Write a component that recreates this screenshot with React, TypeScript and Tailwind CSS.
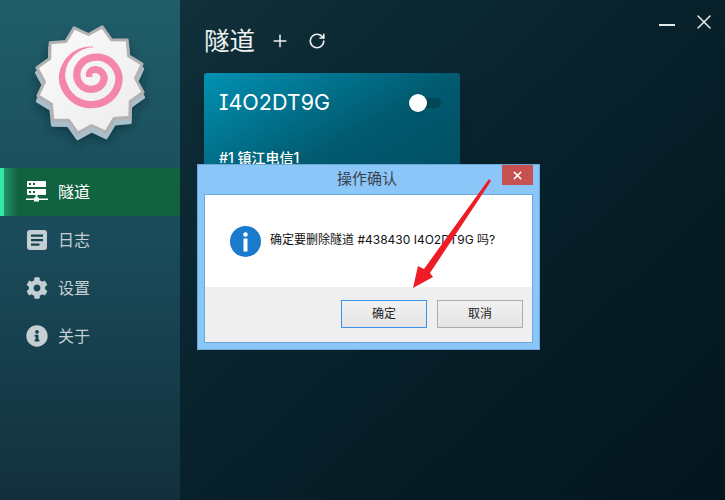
import { Plus, RotateCw, X } from "lucide-react";
import { FaCog, FaInfoCircle } from "react-icons/fa";

const cjk = "font-['Inter','Noto_Sans_CJK_SC',sans-serif]";

// 12 pointed fish cake outline
const starPoints = (cx: number, cy: number, outer: number, inner: number) => {
  const pts: string[] = [];
  for (let i = 0; i < 24; i++) {
    const a = ((i * 15 - 90 - 17) * Math.PI) / 180;
    const r = i % 2 === 0 ? outer : inner;
    pts.push(`${(cx + r * Math.cos(a)).toFixed(1)},${(cy + r * Math.sin(a)).toFixed(1)}`);
  }
  return pts.join(" ");
};

// radius of the swirl per quarter turn, read off the logo, from the outer tip inwards
const swirlRadii = [30, 31, 27.5, 26, 19.5, 16, 12, 11, 7, 3];

const swirlPath = () => {
  const outer: string[] = [];
  const inner: string[] = [];
  const last = swirlRadii.length - 1;
  const steps = 160;
  for (let i = 0; i <= steps; i++) {
    const p = (i / steps) * last;
    const k = Math.min(Math.floor(p), last - 1);
    const f = p - k;
    const r = swirlRadii[k] + (swirlRadii[k + 1] - swirlRadii[k]) * f;
    const a = -Math.PI / 2 - (p * Math.PI) / 2;
    const w = Math.min(3.7, 0.4 + p * 2.8);
    const c = Math.cos(a);
    const s = Math.sin(a);
    outer.push(`${(93 + (r + w) * c).toFixed(1)} ${(77 + (r + w) * s).toFixed(1)}`);
    inner.unshift(`${(93 + (r - w) * c).toFixed(1)} ${(77 + (r - w) * s).toFixed(1)}`);
  }
  return `M${outer.join("L")}L${inner.join("L")}Z`;
};

const Logo = () => (
  <svg width="180" height="168" viewBox="0 0 180 168" className="block">
    <defs>
      <filter id="logoShadow" x="-20%" y="-20%" width="140%" height="140%">
        <feDropShadow dx="0" dy="3" stdDeviation="5" floodColor="#06202a" floodOpacity="0.55" />
      </filter>
      <linearGradient id="logoFace" x1="0" y1="0" x2="1" y2="1">
        <stop offset="0" stopColor="#fbfbfb" />
        <stop offset="1" stopColor="#ececec" />
      </linearGradient>
    </defs>
    <polygon
      points={starPoints(90, 85, 55, 46)}
      fill="#a9bfcc"
      stroke="#a9bfcc"
      strokeWidth="3"
      strokeLinejoin="round"
      filter="url(#logoShadow)"
    />
    <polygon
      points={starPoints(90, 80, 54.5, 45.5)}
      fill="url(#logoFace)"
      stroke="#b2b2b2"
      strokeWidth="3"
      strokeLinejoin="round"
    />
    <path d={swirlPath()} fill="#f486a9" />
  </svg>
);

const ServerIcon = () => (
  <svg width="22" height="22" viewBox="0 0 22 22" fill="currentColor">
    <path fillRule="evenodd" d="M2 0h17a1 1 0 0 1 1 1v5H1V1a1 1 0 0 1 1-1ZM3 2v2h2V2H3Zm4 0v2h2V2H7Z" />
    <path fillRule="evenodd" d="M1 8h19v5a1 1 0 0 1-1 1H2a1 1 0 0 1-1-1V8Zm2 2v2h2v-2H3Zm4 0v2h2v-2H7Z" />
    <path d="M9.500 14h2v2.500h1.500v1H22v1.500H13v1.500H8V19H0v-1.500h8v-1h1.500V14Z" />
  </svg>
);

const LogIcon = () => (
  <svg width="20" height="20" viewBox="0 0 20 20">
    <rect width="20" height="20" rx="3" fill="currentColor" />
    <path d="M4 4.500h12v2.200H4ZM4 9h12v2.200H4ZM4 13.500h8.500v2.200H4Z" fill="#17424f" />
  </svg>
);

const navItems = [
  { label: "隧道", icon: <ServerIcon />, active: true },
  { label: "日志", icon: <LogIcon /> },
  { label: "设置", icon: <FaCog size={22} /> },
  { label: "关于", icon: <FaInfoCircle size={22} /> },
];

const Sidebar = () => (
  <aside className="w-[180px] shrink-0 bg-gradient-to-b from-[#1f5d69] via-[#1a4a5a] to-[#12303b]">
    <Logo />
    <nav>
      {navItems.map((item) => (
        <div
          key={item.label}
          className={
            item.active
              ? "flex h-12 items-center gap-[10px] pl-[26px] bg-[#11633f] text-white"
              : "flex h-12 items-center gap-[10px] pl-[26px] text-[#c5cfd3]"
          }
        >
          {item.active && (
            <span className="absolute left-0 h-12 w-[18px] bg-gradient-to-r from-[#2a9f7e] to-[#11633f]">
              <span className="block h-12 w-1 bg-[#35e6a4]" />
            </span>
          )}
          <span className="relative flex w-[22px] justify-center">{item.icon}</span>
          <span className="relative text-[16px]">{item.label}</span>
        </div>
      ))}
    </nav>
  </aside>
);

const Card = () => (
  <div className="mt-[13px] h-[150px] w-[256px] rounded-[3px] bg-gradient-to-br from-[#0192b3] via-[#015a70] to-[#014a5c] px-[15px] pt-[13px] text-white shadow-lg">
    <div className="flex items-center justify-between pr-[4px]">
      <span className="text-[21.500px] leading-[33px] [font-feature-settings:'cv08']">I4O2DT9G</span>
      <span className="relative h-[10px] w-[32px] rounded-full bg-[#014656]">
        <span className="absolute left-0 top-[-4px] h-[18px] w-[18px] rounded-full bg-white shadow" />
      </span>
    </div>
    <p className="mt-[28px] text-[14px] font-medium">#1 镇江电信1</p>
  </div>
);

const ConfirmDialog = () => (
  <div className="absolute left-[197px] top-[164px] flex h-[186px] w-[343px] flex-col border border-[#6ea6d8] bg-[#8bc6f9] px-[6px] pb-[6px]">
    <div className="relative flex h-[29px] shrink-0 items-center justify-center pr-[3px] text-[15px] text-[#3a3f4b]">
      操作确认
      <span className="absolute right-0 top-0 flex h-5 w-[31px] items-center justify-center bg-[#c75050] text-white">
        <X size={13} strokeWidth={3} />
      </span>
    </div>
    <div className="flex flex-1 flex-col border border-[#6aa8e0] bg-white">
      <div className="flex h-[92px] items-center gap-[9px] pl-[25px] text-[12px] text-[#111]">
        <svg width="31" height="31" viewBox="0 0 31 31">
          <circle cx="15.500" cy="15.500" r="15.500" fill="#1a7acb" />
          <circle cx="15.500" cy="8.500" r="2.300" fill="#fff" />
          <rect x="13.500" y="12.500" width="4" height="13" fill="#fff" />
        </svg>
        <span className="-mt-[2px]">确定要删除隧道 #438430 I4O2DT9G 吗?</span>
      </div>
      <div className="flex flex-1 justify-end gap-[10px] bg-[#efefef] pr-[9px] pt-[13px]">
        <button className="h-[28px] w-[86px] border border-[#3f93e8] bg-gradient-to-b from-[#f1f1f1] to-[#e4e4e4] text-[12px] text-[#222]">
          确定
        </button>
        <button className="h-[28px] w-[86px] border border-[#acacac] bg-gradient-to-b from-[#f1f1f1] to-[#e4e4e4] text-[12px] text-[#222]">
          取消
        </button>
      </div>
    </div>
  </div>
);

const App = () => {
  return (
    <div className={`relative flex h-[500px] w-[725px] overflow-hidden ${cjk}`}>
      <Sidebar />
      <main className="flex-1 bg-gradient-to-br from-[#10303a] via-[#07202a] to-[#04161d] pl-6 pr-[9px]">
        <header className="flex h-[60px] items-start justify-between">
          <div className="mt-[24px] flex items-center text-[#eef1f2]">
            <h1 className="text-[25.500px] leading-[34px]">隧道</h1>
            <Plus size={20} strokeWidth={1.8} className="ml-[15px]" />
            <RotateCw size={18} strokeWidth={2.2} className="ml-[18px]" />
          </div>
          <div className="mt-[12px] flex items-start text-[#e8ebec]">
            <span className="mt-[12px] h-[2px] w-4 bg-[#e8ebec]" />
            <X size={24} strokeWidth={1.5} className="ml-[17px] -mt-[2px]" />
          </div>
        </header>
        <Card />
      </main>
      <ConfirmDialog />
      {/* red annotation arrow drawn over the screenshot */}
      <svg className="absolute left-0 top-0" width="725" height="500" viewBox="0 0 725 500">
        <path d="M489 179 L491 181 L430 273 L433 277 L413 288 L418 266 L424 269 Z" fill="#ee1c25" />
      </svg>
    </div>
  );
};

export default App;
